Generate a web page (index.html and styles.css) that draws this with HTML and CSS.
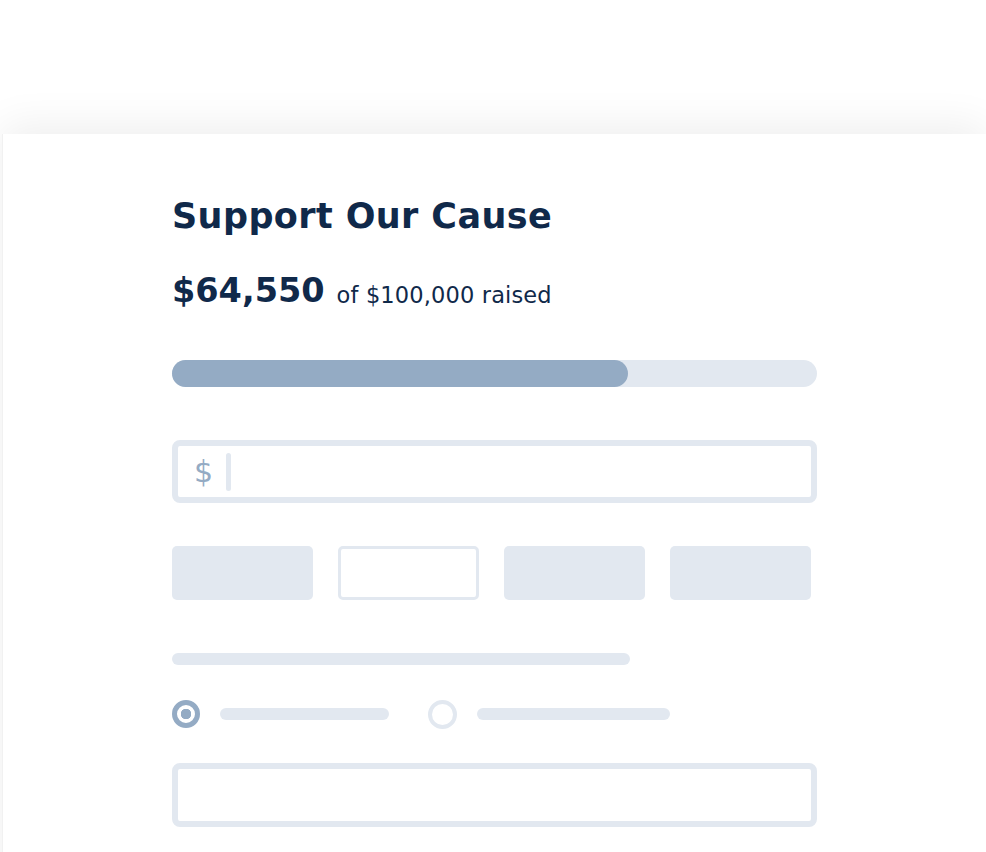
FILE: index.html
```html
<!DOCTYPE html>
<html lang="en">
<head>
<meta charset="utf-8">
<title>Support Our Cause</title>
<link rel="stylesheet" href="styles.css">
</head>
<body>
<div class="card">
  <div class="content">
    <h1 class="title">Support Our Cause</h1>
    <div class="amount">
      <span class="raised">$64,550</span>
      <span class="goal">of $100,000 raised</span>
    </div>
    <div class="progress"><div class="progress-fill"></div></div>
    <div class="field">
      <span class="currency">$</span>
      <span class="caret"></span>
    </div>
    <div class="presets">
      <div class="preset"></div>
      <div class="preset preset-outline"></div>
      <div class="preset"></div>
      <div class="preset"></div>
    </div>
    <div class="line line-long"></div>
    <div class="radios">
      <span class="radio radio-on"></span>
      <span class="line line-r1"></span>
      <span class="radio radio-off"></span>
      <span class="line line-r2"></span>
    </div>
    <div class="field field-bottom"></div>
  </div>
</div>
</body>
</html>
```

FILE: styles.css
```css
html, body {
  margin: 0;
  padding: 0;
  background: #ffffff;
  overflow: hidden;
}

.card {
  margin: 134px 0 0 2px;
  padding: 62px 0 0 169px;
  min-height: 760px;
  background: #ffffff;
  box-shadow: 0 -8px 40px rgba(0, 0, 0, 0.07);
  border-left: 1px solid #f1f1f1;
}

.content {
  width: 645px;
  font-family: "DejaVu Sans", "Noto Sans", sans-serif;
  color: #10294a;
}

.title {
  margin: 0;
  font-size: 35px;
  font-weight: 700;
  line-height: 40px;
  letter-spacing: 0.4px;
}

.amount {
  display: flex;
  align-items: baseline;
  gap: 12px;
  margin-top: 35px;
  height: 40px;
}

.raised {
  font-size: 33.5px;
  font-weight: 700;
  line-height: 40px;
}

.goal {
  font-size: 22.5px;
  font-weight: 400;
  line-height: 1;
  letter-spacing: 0.15px;
  position: relative;
  top: 1px;
}

.progress {
  margin-top: 49px;
  height: 27px;
  border-radius: 14px;
  background: #e2e8f0;
}

.progress-fill {
  width: 456px;
  height: 100%;
  border-radius: 14px;
  background: #94abc4;
}

.field {
  box-sizing: border-box;
  margin-top: 53px;
  height: 63px;
  border: 6px solid #e2e8f0;
  border-radius: 8px;
  display: flex;
  align-items: center;
  padding-left: 16px;
}

.currency {
  font-size: 30px;
  color: #94abc4;
  line-height: 1;
}

.caret {
  width: 5px;
  height: 38px;
  margin-left: 13px;
  border-radius: 3px;
  background: #e2e8f0;
}

.presets {
  display: flex;
  gap: 25px;
  margin-top: 43px;
}

.preset {
  box-sizing: border-box;
  width: 141px;
  height: 54px;
  border-radius: 5px;
  background: #e2e8f0;
}

.preset-outline {
  background: #ffffff;
  border: 3px solid #e2e8f0;
}

.line {
  display: block;
  height: 12px;
  border-radius: 6px;
  background: #e2e8f0;
}

.line-long {
  margin-top: 53px;
  width: 458px;
}

.radios {
  display: flex;
  align-items: center;
  margin-top: 35px;
  height: 28px;
}

.radio {
  box-sizing: border-box;
  width: 28px;
  height: 28px;
  border-radius: 50%;
  flex: none;
}

.radio-on {
  border: 5px solid #94abc4;
  background: radial-gradient(circle, #94abc4 0 5px, #ffffff 5.5px);
}

.radio-off {
  margin-left: 39px;
  width: 29px;
  height: 29px;
  border: 4px solid #e2e8f0;
}

.line-r1 {
  margin-left: 20px;
  width: 169px;
}

.line-r2 {
  margin-left: 20px;
  width: 193px;
}

.field-bottom {
  margin-top: 35px;
  height: 64px;
}
```
